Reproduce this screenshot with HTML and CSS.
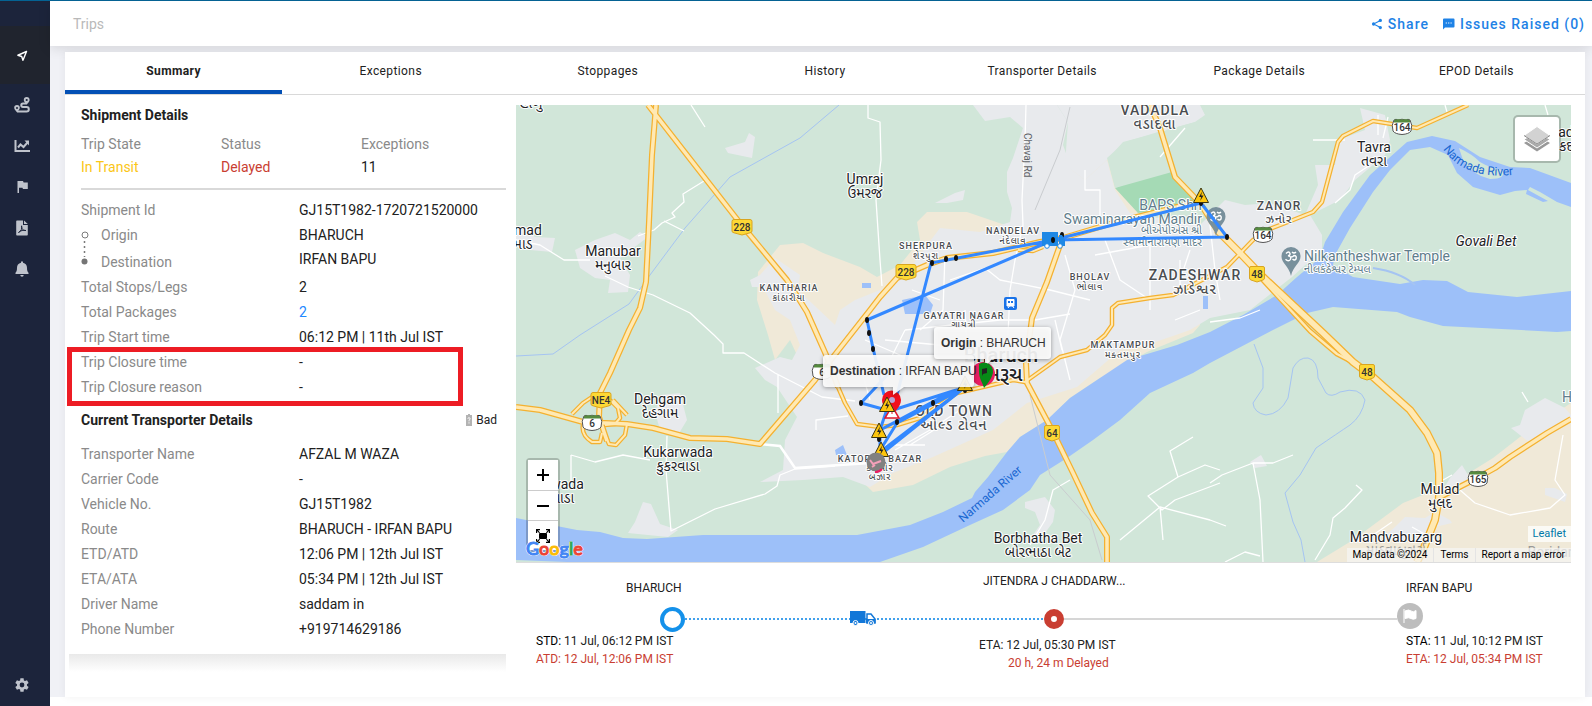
FILE: index.html
```html
<!DOCTYPE html>
<html lang="en">
<head>
<meta charset="utf-8">
<title>Trips</title>
<link rel="stylesheet" href="styles.css">
</head>
<body>
<nav class="sidebar" aria-label="Main">
  <a class="nav-item active" href="#trips" aria-label="Trips"><svg viewBox="0 0 16 16"><path d="M14 2 2.500 7 7.600 8.600 9.300 13.600Z" fill="none" stroke="#fff" stroke-width="1.900" stroke-linejoin="round"/></svg></a>
  <a class="nav-item" href="#routes" aria-label="Routes"><svg viewBox="0 0 16 16"><path d="M12.500 6.500H9a1.500 1.500 0 0 0 0 3.500h3.600a2.200 2.200 0 0 1 0 4.400H3" fill="none" stroke="#bfc3cc" stroke-width="2"/><path fill="#bfc3cc" fill-rule="evenodd" d="M12.700 0a2.900 2.900 0 0 1 2.900 2.900C15.600 4.700 12.700 7.500 12.700 7.500S9.800 4.700 9.800 2.900A2.900 2.900 0 0 1 12.700 0Zm0 1.900a1.100 1.100 0 1 0 0 2.200 1.100 1.100 0 0 0 0-2.200ZM3 8a2.800 2.800 0 0 1 2.800 2.800C5.800 12.500 3 15.200 3 15.200S.2 12.500.2 10.800A2.800 2.800 0 0 1 3 8Zm0 1.900a1 1 0 1 0 0 2 1 1 0 0 0 0-2Z"/></svg></a>
  <a class="nav-item" href="#reports" aria-label="Reports"><svg viewBox="0 0 16 16"><path d="M1.500 2v11H16" fill="none" stroke="#bfc3cc" stroke-width="2"/><path d="M4 9.500 6.500 6.500 9.500 9 13.500 4.500" fill="none" stroke="#bfc3cc" stroke-width="2"/><path d="M10.500 2.500H15V7.500Z" fill="#bfc3cc"/></svg></a>
  <a class="nav-item" href="#flags" aria-label="Flags"><svg viewBox="0 0 16 16"><path d="M3.500 2H9l.6 1.400h4.200v6.700H9L8.400 8.700H5V14H3.500Z" fill="#bfc3cc"/></svg></a>
  <a class="nav-item" href="#documents" aria-label="Documents"><svg viewBox="0 0 16 16"><path d="M2.200 1.200Q2.200.4 3 .4H9V5h4.800v9.800q0 .8-.8.8H3q-.8 0-.8-.8ZM10 .4 13.800 4H10Z" fill="#bfc3cc"/><path d="M4.500 12.500C7 11.500 8.500 8 7.600 5.800 7 8.500 9.300 11 12 10.500 9.500 9.800 6.500 10.500 4.500 12.500Z" fill="none" stroke="#1c243b"/></svg></a>
  <a class="nav-item" href="#alerts" aria-label="Alerts"><svg viewBox="0 0 16 16"><path d="M7 .5h2v1.200c2.700.6 4 2.600 4 5 0 3 .6 3.800 1.500 5v1.300h-13v-1.300c.9-1.200 1.500-2 1.500-5 0-2.400 1.300-4.400 4-5ZM6.300 14h3.400a1.700 1.700 0 0 1-3.400 0Z" fill="#bfc3cc"/></svg></a>
  <a class="nav-item settings" href="#settings" aria-label="Settings"><svg viewBox="0 0 24 24"><path fill="#bfc3cc" d="M19.400 13a7.500 7.500 0 0 0 0-2l2.500-1.900-2.400-4.200-3 1.200a7.600 7.600 0 0 0-1.700-1L14.400 2h-4.800l-.5 3.100a7.600 7.600 0 0 0-1.700 1l-3-1.200L2 9.100 4.600 11a7.500 7.500 0 0 0 0 2L2 14.900l2.400 4.200 3-1.200q.8.600 1.700 1l.5 3.100h4.800l.4-3.100q.9-.4 1.700-1l3 1.200 2.400-4.200ZM12 15.600a3.600 3.600 0 1 1 0-7.200 3.600 3.600 0 0 1 0 7.200Z"/></svg></a>
</nav>
<div class="page">
  <header class="topbar">
    <h1>Trips</h1>
    <div class="actions">
      <button type="button"><svg width="12" height="12" viewBox="0 0 13 14"><path d="M10.500 2.800 2.500 7l8 4.200" fill="none" stroke="currentColor" stroke-width="1.300"/><g fill="currentColor"><circle cx="10.400" cy="2.800" r="1.900"/><circle cx="2.500" cy="7" r="1.900"/><circle cx="10.400" cy="11.200" r="1.900"/></g></svg>Share</button>
      <button type="button"><svg width="13" height="14" viewBox="0 0 13 14"><path d="M2 1.500h9.500q1 0 1 1V9.500q0 1-1 1H3L1 12.500V2.500q0-1 1-1Z" fill="currentColor"/><path d="M3.700 6h1.200m1.200 0h1.200m1.200 0h1.200" stroke="#fff" stroke-width="1.200"/></svg>Issues Raised (0)</button>
    </div>
  </header>
  <main class="card">
    <div class="tabs" role="tablist">
      <button role="tab" aria-selected="true" class="selected">Summary</button>
      <button role="tab">Exceptions</button>
      <button role="tab">Stoppages</button>
      <button role="tab">History</button>
      <button role="tab">Transporter Details</button>
      <button role="tab">Package Details</button>
      <button role="tab">EPOD Details</button>
    </div>
    <div class="content">
      <section class="details">
        <h2>Shipment Details</h2>
        <dl class="states">
          <div><dt>Trip State</dt><dd class="amber">In Transit</dd></div>
          <div><dt>Status</dt><dd class="red">Delayed</dd></div>
          <div><dt>Exceptions</dt><dd>11</dd></div>
        </dl>
        <dl class="rows">
          <div class="row"><dt>Shipment Id</dt><dd>GJ15T1982-1720721520000</dd></div>
          <div class="leg">
            <svg class="leg-mark" viewBox="0 0 8 36"><circle cx="4" cy="4" r="3" fill="none" stroke="#7a7a7a"/><path d="M3.500 10v16" stroke="#7a7a7a" stroke-width="1.500" stroke-dasharray="2 3"/><circle cx="3.500" cy="30.500" r="3" fill="#757575"/></svg>
            <div class="row"><dt>Origin</dt><dd>BHARUCH</dd></div>
            <div class="row"><dt>Destination</dt><dd>IRFAN BAPU</dd></div>
          </div>
          <div class="row"><dt>Total Stops/Legs</dt><dd>2</dd></div>
          <div class="row"><dt>Total Packages</dt><dd><a href="#packages">2</a></dd></div>
          <div class="row"><dt>Trip Start time</dt><dd>06:12 PM | 11th Jul IST</dd></div>
          <div class="closure">
            <div class="row"><dt>Trip Closure time</dt><dd>-</dd></div>
            <div class="row"><dt>Trip Closure reason</dt><dd>-</dd></div>
          </div>
        </dl>
        <div class="sub-head">
          <h2>Current Transporter Details</h2>
          <span class="battery"><svg width="6" height="12" viewBox="0 0 6 12"><path d="M2 0h2v1h2v11H0V1h2Z" fill="#b3b3b3"/><path d="M1.900 4.700Q2 3.700 3 3.700t1.100 1Q4.100 5.500 3 6.300v1M3 8.300v1.200" stroke="#fff" fill="none"/></svg>Bad</span>
        </div>
        <dl class="rows">
          <div class="row"><dt>Transporter Name</dt><dd>AFZAL M WAZA</dd></div>
          <div class="row"><dt>Carrier Code</dt><dd>-</dd></div>
          <div class="row"><dt>Vehicle No.</dt><dd>GJ15T1982</dd></div>
          <div class="row"><dt>Route</dt><dd>BHARUCH - IRFAN BAPU</dd></div>
          <div class="row"><dt>ETD/ATD</dt><dd>12:06 PM | 12th Jul IST</dd></div>
          <div class="row"><dt>ETA/ATA</dt><dd>05:34 PM | 12th Jul IST</dd></div>
          <div class="row"><dt>Driver Name</dt><dd>saddam in</dd></div>
          <div class="row"><dt>Phone Number</dt><dd>+919714629186</dd></div>
        </dl>
      </section>
      <section class="journey">
        <div class="map">
          <svg class="map-canvas" viewBox="516 105 1055 457" preserveAspectRatio="xMidYMid slice">
            <defs>
              <g id="warn"><path d="M0-8 7.500 6.500h-15Z" fill="#fdc50c" stroke="#3a3410" stroke-linejoin="round"/><path d="M1-4.500-2 1H.2L-.8 5 2.500-.5H.2Z" fill="#222"/></g>
              <g id="nh"><path d="M-8-7.500H8Q10-7.500 10-5.500V4Q10 5.500 8 5.800L0 8-8 5.800Q-10 5.500-10 4V-5.500Q-10-7.500-8-7.500Z" fill="#fdd835" stroke="#d9a520"/></g>
              <g id="nh-s"><path d="M-6-7.500H6Q7.500-7.500 7.500-6V4Q7.500 5.500 6 6L0 8-6 6Q-7.500 5.500-7.500 4V-6Q-7.500-7.500-6-7.500Z" fill="#fdd835" stroke="#d9a520"/></g>
              <g id="sh"><path d="M-8-7Q-6-8.500-4-7 0-8.500 4-7 6-8.500 8-7 11-2 9 4 7 7 0 7.500-7 7-9 4-11-2-8-7Z" fill="#fff" stroke="#555"/><path d="M-8-7Q-6-8 0-7.500 6-8 8-7V-4.500H-8Z" fill="#558b3f"/></g>
              <g id="om"><path d="M0 18C-2 8-9.500 5-9.500-1.500a9.500 9.500 0 0 1 19 0C9.500 5 2 8 0 18Z" fill="#78909c"/><path d="M-5-4.500q3-3 4 0 .3 2-2 2.300 3.500.3 2.500 3.500-2 3-5 0M0-1q2 0 3-1.500 3 0 2 3.500-1.500 2-3.500 0M1-6q2 2 4 0" fill="none" stroke="#fff" stroke-width="1.400"/></g>
            </defs>
            <rect x="516" y="105" width="1055" height="457" fill="#d1e6d9"/>
            <g fill="#f0e9d8">
              <path d="M758 272 780 245 803 243 823 253 860 267 877 277 900 265 920 240 917 222 927 212 967 212 1005 225 1035 235 1070 215 1060 150 1095 170 1107 155 1115 187 1140 215 1200 240 1200 325 1193 333 1147 352 1100 378 1070 398 1047 420 1020 437 1007 452 985 456 950 467 913 485 873 492 850 470 790 340 775 360 768 335 757 300Z"/>
              <path d="M1317 562 1353 540 1403 503 1453 483 1493 458 1520 437 1571 403V562Z"/>
            </g>
            <g fill="#e8eaed">
              <path d="M973 105 985 121 1010 117 1023 128 1013 158 1007 172 1007 192 1012 208 1010 222 980 232 940 228 925 248 905 275 880 290 855 300 840 310 835 325 798 290 800 275 775 258 760 275 750 280 752 287 763 287 775 310 790 320 800 345 792 360 780 357 755 368 765 380 777 387 797 417 785 440 783 470 760 482 803 480 843 477 870 487 893 473 933 457 993 430 1027 403 1077 387 1120 350 1147 345 1190 330 1210 318 1250 310 1292 277 1322 250 1322 235 1310 215 1340 200 1355 180 1385 155 1390 140 1385 115 1360 108 1365 130 1338 140 1335 165 1315 165 1318 185 1305 215 1270 203 1245 205 1225 200 1200 225 1130 213 1115 190 1107 160 1085 180 1072 170 1063 145 1068 122 1057 105Z"/>
              <path d="M1057 105H1200L1205 115 1195 122 1150 135 1123 142 1107 160 1085 180 1065 165 1068 122Z"/>
              <path d="M595 240 615 233 630 240 640 232 648 237 620 258 630 275 628 292 608 293 610 280 595 278 580 268 575 250ZM516 225 535 237 555 238 552 252 530 250 516 247Z"/>
              <path d="M725 148 745 142 749 133 755 137 752 158 728 153ZM661 395 680 393 687 420 678 435 660 430 655 412ZM643 502 651 504 660 524 678 530 668 537 628 533 635 522ZM1025 502 1045 497 1055 510 1053 522 1040 540 1028 542 1040 525 1035 512 1025 508ZM1511 428 1520 425 1525 410 1545 398 1565 408 1571 415V422L1530 443ZM1450 478 1462 465 1468 475 1465 490 1440 495ZM1395 527 1405 517 1425 518 1435 512 1450 520 1452 523 1435 527 1425 540 1380 540ZM1250 462 1261 455 1267 466 1255 468ZM1545 488 1555 488 1567 494 1565 502 1545 495ZM935 203 955 193 965 190 963 200 947 203Z"/>
            </g>
            <path d="M1115 188 1168 168 1198 203 1138 213Z" fill="#a5dab5"/>
            <path d="M1125 142 1158 132 1172 172 1115 188 1107 158ZM1166 130 1210 118V200L1182 180Z" fill="#d1e6d9"/>
            <g fill="#9dc0f9">
              <path d="M516 518 577 530 600 532 623 538 647 539 703 535 857 535 910 525 943 512 972 498 975 492 988 477 1007 452 1020 437 1047 420 1070 398 1100 378 1127 360 1177 345 1210 332 1243 315 1277 295 1297 277 1320 258 1325 242 1343 212 1370 175 1407 142 1432 136 1455 141 1480 157 1510 167 1530 168 1571 183V207L1557 202 1540 192 1530 187 1528 190 1548 201 1543 202 1526 194 1527 190 1515 191 1500 195 1473 187 1457 173 1448 155 1430 147 1410 150 1390 170 1373 192 1350 228 1335 255 1333 265 1353 277 1400 284 1423 280 1447 281 1468 292 1517 297 1571 291V331L1557 332 1443 326 1410 317 1397 312 1333 307 1307 313 1273 330 1210 363 1193 373 1150 393 1120 420 1093 440 1067 458 1040 475 1030 490 1003 510 970 525 923 547 880 562H567L516 560Z"/>
              <path d="M902 300 925 295 933 305 930 314 905 314ZM862 283h9v5h-9ZM1203 296h5v13h-5ZM835 450 843 445 847 455 836 455Z"/>
            </g>
            <path d="M1459 148Q1472 154 1480 162 1490 168 1502 170 1507 179 1490 179 1472 175 1463 160Z" fill="#d1e6d9"/>
            <g fill="none" stroke="#a5c4f2">
              <path d="M839 105 800 138 730 177 685 228 650 275 629 304 580 335 553 354 516 356M1254 344 1263 368V388L1253 403Q1254 413 1266 415 1280 414 1288 398L1293 368Q1299 357 1308 358 1318 360 1318 378L1326 393Q1331 398 1340 392 1360 386 1365 400 1362 416 1350 425 1338 433 1316 448L1300 475 1285 493 1293 522 1301 540 1305 562"/>
              <path d="M1373 268Q1400 272 1415 285" stroke-width="2"/>
            </g>
            <g fill="none" stroke="#fff" stroke-width="1.300" stroke-linejoin="round">
              <path d="M691 105 705 127M516 240 540 245 564 260 590 260M605 276 628 287 653 295 690 313 714 335 723 344V353H744L775 373 822 397 855 401M704 181 683 194 684 202 672 213 675 217 662 223 654 230 638 236M664 221 684 231M667 436 666 470 671 531 715 509 765 494 777 486 780 475 795 469 835 466M571 455 595 462 623 455 650 460M571 455V490M778 375V413M816 430V420L848 416"/>
              <path d="M868 105V118L880 122 881 160 876 200 880 260 882 286M1026 105 1025 140 1022 200 1023 225 1015 260 1010 290 1008 335M945 255 943 310 920 330M1260 310 1240 318 1210 322M1210 225 1215 270 1220 300M1160 157 1185 128M950 280 985 268 1000 280 1050 290 1090 300M965 310 967 345M905 330 1000 320 1035 320 1070 314M885 340 940 345M1065 255 1075 290 1060 340 1070 380M1085 170V190H1100V230M1105 240 1120 280 1150 300M1095 255 1150 245 1150 310M1175 320 1200 310M1180 260V295M912 290 940 300M865 340 900 355 920 370M890 360 905 330M1190 250 1180 280M860 365 870 400M920 370 940 360M975 340 990 370M1055 320 1062 350M895 450 930 430 960 410M910 445 950 420M880 445 925 445"/>
              <path d="M1193 437 1170 451 1178 477 1148 496 1162 510 1175 500 1220 483M1178 477 1205 465 1220 470M1120 540 1160 507 1210 520M1160 507 1163 540M1070 480 1053 490 1045 520 1030 545M1253 463 1260 500 1263 562M1210 483 1222 475 1253 463 1273 463 1293 455M1210 520 1226 526M1356 485 1362 490 1345 508 1333 518 1330 535 1315 560M1460 490 1475 503 1510 515 1550 508 1565 495 1555 480 1563 435M1443 480 1452 475M1225 562 1245 552 1260 556M1373 535 1392 522M1412 527 1435 540M1522 392 1528 402M1335 203 1350 190 1355 175 1370 165M1378 115V135M1388 117 1383 138M1545 105 1548 115M1445 105 1447 112M1313 140H1345"/>
            </g>
            <path d="M760 444 780 446 795 468 825 466 870 463" fill="none" stroke="#fff" stroke-width="2.500"/>
            <path d="M1070 107 1060 150 1035 210M1030 395 1050 475 1090 520 1102 560" fill="none" stroke="#c9cccf"/>
            <g fill="none" stroke-linejoin="round">
              <g stroke="#f4b130">
                <path stroke-width="4.500" d="M572 414 583 403 592 397M610 400 618 408 620 418 615 424 605 425M613 400 627 415M627 424 625 435 616 445 609 444 605 435M583 425Q581 435 592 442L600 442 602 433M838 387 845 403 857 424 880 427 897 425 920 418 957 393 983 387 1013 380 1025 382 1060 357 1087 350 1105 335 1112 325V308L1118 303 1150 298 1173 295 1227 267 1253 240 1267 230 1293 220 1313 212 1322 202 1338 142 1343 136 1373 121 1417 128 1468 105M1018 250 1033 251 1043 247"/>
                <path stroke-width="6" d="M516 407 540 410 583 422 627 424 653 428 690 438 727 439 760 444 815 380 870 310 880 297 897 278 927 265 947 258 993 253 1040 242 1063 238 1113 223 1193 203M648 105 740 223 787 280 807 312 827 357 838 387M656 105 652 155 649 222 646 282 640 308 629 330 610 373 600 393 599 417 607 441M1060 245 1047 282 1032 318 1026 363 1027 383 1052 430 1073 473 1092 513 1107 537V562M1571 419 1547 433 1510 457 1495 468 1477 478 1440 497M1150 105 1160 128 1175 177 1200 203 1217 230"/>
                <path stroke-width="8" d="M1217 230 1240 253 1263 277 1323 333 1353 362 1373 377 1410 410 1427 433 1437 453 1439 473V497L1435 520 1423 550 1417 562"/>
                <path stroke-width="5" d="M1260 277 1310 331 1337 354 1360 366"/>
              </g>
              <g stroke="#ffe9b3">
                <path stroke-width="2" d="M572 414 583 403 592 397M610 400 618 408 620 418 615 424 605 425M613 400 627 415M627 424 625 435 616 445 609 444 605 435M583 425Q581 435 592 442L600 442 602 433M838 387 845 403 857 424 880 427 897 425 920 418 957 393 983 387 1013 380 1025 382 1060 357 1087 350 1105 335 1112 325V308L1118 303 1150 298 1173 295 1227 267 1253 240 1267 230 1293 220 1313 212 1322 202 1338 142 1343 136 1373 121 1417 128 1468 105M1018 250 1033 251 1043 247"/>
                <path stroke-width="3.500" d="M516 407 540 410 583 422 627 424 653 428 690 438 727 439 760 444 815 380 870 310 880 297 897 278 927 265 947 258 993 253 1040 242 1063 238 1113 223 1193 203M648 105 740 223 787 280 807 312 827 357 838 387M656 105 652 155 649 222 646 282 640 308 629 330 610 373 600 393 599 417 607 441M1060 245 1047 282 1032 318 1026 363 1027 383 1052 430 1073 473 1092 513 1107 537V562M1571 419 1547 433 1510 457 1495 468 1477 478 1440 497M1150 105 1160 128 1175 177 1200 203 1217 230"/>
                <path stroke-width="5.500" d="M1217 230 1240 253 1263 277 1323 333 1353 362 1373 377 1410 410 1427 433 1437 453 1439 473V497L1435 520 1423 550 1417 562"/>
                <path stroke-width="2.500" d="M1260 277 1310 331 1337 354 1360 366"/>
              </g>
            </g>
            <g class="shields">
              <use href="#nh" x="742" y="227"/><text x="742" y="231">228</text>
              <use href="#nh" x="906" y="272"/><text x="906" y="276">228</text>
              <use href="#nh" x="601" y="400"/><text x="601" y="404">NE4</text>
              <use href="#nh-s" x="1257" y="274"/><text x="1257" y="278">48</text>
              <use href="#nh-s" x="1367" y="372"/><text x="1367" y="376">48</text>
              <use href="#nh-s" x="1052" y="433"/><text x="1052" y="437">64</text>
              <use href="#sh" x="1402" y="127"/><text x="1402" y="131">164</text>
              <use href="#sh" x="1263" y="235"/><text x="1263" y="239">164</text>
              <use href="#sh" x="1478" y="479"/><text x="1478" y="483">165</text>
              <use href="#sh" x="592" y="423"/><text x="592" y="427">6</text>
              <use href="#sh" x="822" y="372"/><text x="822" y="376">6</text>
            </g>
            <use href="#om" x="1216" y="218"/><use href="#om" x="1291" y="258"/>
            <g><rect x="1004" y="297" width="13" height="13" rx="2" fill="#1a73e8"/><path d="M1007 299.500h7v6.500h-7ZM1008 308l1.500-2m3 0 1.500 2" fill="#fff" stroke="#fff"/><path d="M1008 301h2v2h-2Zm3 0h2v2h-2Z" fill="#1a73e8"/></g>
            <g class="place">
              <text x="531" y="108">હાબુ</text>
              <text x="528" y="235">mad</text><text x="523" y="249">માડ</text>
              <text x="613" y="256">Manubar</text><text x="613" y="270">મનુબાર</text>
              <text x="865" y="184">Umraj</text><text x="865" y="198">ઉમરજ</text>
              <text x="660" y="404">Dehgam</text><text x="660" y="418">દેહગામ</text>
              <text x="678" y="457">Kukarwada</text><text x="678" y="471">કુકરવાડા</text>
              <text x="567" y="489">wada</text><text x="563" y="503">વાડા</text>
              <text x="1374" y="152">Tavra</text><text x="1374" y="166">તવરા</text>
              <text x="1486" y="246" class="italic">Govali Bet</text>
              <text x="1566" y="137">ad</text><text x="1566" y="151">કદ</text>
              <text x="1440" y="494">Mulad</text><text x="1440" y="508">મુલદ</text>
              <text x="1396" y="542">Mandvabuzarg</text><text x="1396" y="555" class="faded">માંડવાબુઝર્ગ</text>
              <text x="1038" y="543">Borbhatha Bet</text><text x="1038" y="557">બોરભાઠા બેટ</text>
              <text x="1550" y="557" class="faded">Boridar</text>
            </g>
            <g class="area">
              <text x="1155" y="115" class="town">VADADLA</text><text x="1155" y="129" class="town">વડાદલા</text>
              <text x="1195" y="280" class="town">ZADESHWAR</text><text x="1195" y="294" class="town">ઝાડેશ્વર</text>
              <text x="954" y="416" class="town">OLD TOWN</text><text x="954" y="430" class="town">ઓલ્ડ ટોવન</text>
              <text x="1279" y="210" class="mid">ZANOR</text><text x="1279" y="223" class="mid">ઝનોર</text>
              <text x="789" y="291">KANTHARIA</text><text x="789" y="301">કાંઠારીયા</text>
              <text x="926" y="249">SHERPURA</text><text x="926" y="259">શેરપુરા</text>
              <text x="1013" y="234">NANDELAV</text><text x="1013" y="244">નંદેલાવ</text>
              <text x="1090" y="280">BHOLAV</text><text x="1090" y="290">ભોલાવ</text>
              <text x="964" y="319">GAYATRI NAGAR</text><text x="964" y="328">ગાયત્રી</text>
              <text x="1123" y="348">MAKTAMPUR</text><text x="1123" y="358">મક્તમપુર</text>
              <text x="880" y="462">KATOPOR BAZAR</text><text x="880" y="471">કટોપોર</text><text x="880" y="480">બઝાર</text>
            </g>
            <g class="poi">
              <text x="1202" y="210">BAPS Shri</text><text x="1202" y="224">Swaminarayan Mandir</text>
              <text x="1202" y="234" class="small">બીએપીએસ શ્રી</text><text x="1202" y="246" class="small">સ્વામીનારાયણ મંદિર</text>
              <text x="1304" y="261" class="after">Nilkantheshwar Temple</text><text x="1304" y="273" class="small after">નીલકંઠેશ્વર ટેમ્પલ</text>
              <text x="1567" y="402">H</text>
            </g>
            <text class="river" transform="translate(963 523) rotate(-41)">Narmada River</text>
            <path id="river-arc" d="M1443 149Q1466 182 1520 174" fill="none"/>
            <text class="river"><textPath href="#river-arc">Narmada River</textPath></text>
            <text class="road" transform="translate(1024 133) rotate(90)">Chavaj Rd</text>
            <g class="city"><text x="1001" y="362">Bharuch</text><text x="1003" y="381">ભરૂચ</text></g>
            <path d="M1053 240 1201 203 1227 237 1053 240 867 320 873 348 884 395M890 372 861 403 890 411 953 391 964 388 897 423 879 452M1053 240 931 263 897 395M964 388 880 430M953 391 880 430 880 452 964 388M890 400 880 430M964 388 880 455" fill="none" stroke="#3388ff" stroke-width="3" stroke-linejoin="round"/>
            <g fill="#111"><ellipse cx="867" cy="320" rx="2" ry="3"/><ellipse cx="869" cy="333" rx="2" ry="3"/><ellipse cx="873" cy="349" rx="2" ry="3"/><ellipse cx="861" cy="403" rx="2" ry="3"/><ellipse cx="932" cy="263" rx="2" ry="3"/><ellipse cx="946" cy="259" rx="2" ry="3"/><ellipse cx="956" cy="258" rx="2" ry="3"/><ellipse cx="1201" cy="203" rx="2" ry="3"/><ellipse cx="1227" cy="237" rx="2" ry="3"/><ellipse cx="1062" cy="235" rx="2" ry="3"/><ellipse cx="933" cy="403" rx="2" ry="3"/><ellipse cx="897" cy="422" rx="2" ry="3"/><ellipse cx="879" cy="439" rx="2" ry="3"/><ellipse cx="965" cy="390" rx="2" ry="3"/></g>
            <g><path d="M1042 232h16v14h-16Zm17 3h3l3 5v6h-6Z" fill="#1e88e5"/><circle cx="1047" cy="246" r="2.300" fill="#fff" stroke="#1e88e5"/><circle cx="1060" cy="246" r="2.300" fill="#fff" stroke="#1e88e5"/><ellipse cx="1053" cy="240" rx="2" ry="3" fill="#111"/></g>
            <path d="M892 418C889 411 882 407 882 400a9 9 0 0 1 19 0C901 407 894 411 892 418Z" fill="#f2101c"/><circle cx="892" cy="400" r="3" fill="#b9a4d6"/>
            <path d="M892 406 899 418H885Z" fill="#fff" stroke="#e0182d" stroke-width="1.500"/><path d="M892 410v4" stroke="#e0182d"/>
            <use href="#warn" x="1201" y="196"/><use href="#warn" x="887" y="405"/><use href="#warn" x="879" y="431"/><use href="#warn" x="881" y="450"/><use href="#warn" x="965" y="384"/>
            <circle cx="876" cy="462" r="9.500" fill="#808080"/><path d="M870 460l3 4 8-3M872 467l3-2" fill="none" stroke="#f3a0ba" stroke-width="2"/><path d="M882 469a9 9 0 0 1-7 3" fill="none" stroke="#e91e63" stroke-width="2"/>
            <circle cx="983" cy="374" r="12" fill="#e91e63"/>
            <g class="tips">
              <path d="M826 355H971q3 0 3 3V384q0 3-3 3H904L893 395V387H826q-3 0-3-3V358q0-3 3-3Z"/><path d="M937 327H1048q3 0 3 3V356q0 3-3 3H992L985 367V359H937q-3 0-3-3V330q0-3 3-3Z"/>
              <text x="830" y="375"><tspan class="bold">Destination</tspan> : IRFAN BAPU</text>
              <text x="941" y="347"><tspan class="bold">Origin</tspan> : BHARUCH</text>
            </g>
            <path d="M984 388C982 381 979 379 979 371V364Q984 361 989 364 995 369 992 376 990 381 984 388Z" fill="#078a17"/><path d="M982 376v-7l5-1v5l-4 1" fill="#222"/>
          </svg>
          <div class="zoom"><button type="button" aria-label="Zoom in"><svg viewBox="0 0 12 12"><path d="M0 6h12M6 0v12" stroke="#000" stroke-width="2"/></svg></button><button type="button" aria-label="Zoom out"><svg viewBox="0 0 12 12"><path d="M0 6h12" stroke="#000" stroke-width="2"/></svg></button><button type="button" aria-label="Full screen"><svg class="full" viewBox="0 0 14 14"><rect x="3" y="4" width="8" height="6" rx="1"/><path d="M0 0h4v1.200H2L4 3.500l-.8.7L1.200 2v2H0ZM14 0v4h-1.200V2l-2 2.200-.8-.7L12 1.200h-2V0ZM0 14v-4h1.200v2l2-2.200.8.700-2 2.300h2V14ZM14 14h-4v-1.200h2l-2-2.300.8-.7 2 2.200v-2H14Z"/></svg></button></div>
          <button type="button" class="layers" aria-label="Layers"><svg viewBox="0 0 26 26"><path d="M0 17 13 9 26 17 13 25.500Z" fill="#999"/><path d="M0 13.500 13 5.500 26 13.500 13 22Z" fill="#aaa" stroke="#fff"/><path d="M0 9.500 13 .5 26 9.500 13 18Z" fill="#d2d2d2" stroke="#fff"/><path d="M0 9.500 13 18 26 9.500" fill="none" stroke="#888"/></svg></button>
          <span class="google"><i class="b">G</i><i class="r">o</i><i class="y">o</i><i class="b">g</i><i class="g">l</i><i class="r">e</i></span>
          <a class="leaflet" href="#leaflet">Leaflet</a>
          <div class="credits"><span>Map data ©2024</span><a href="#terms">Terms</a><a href="#report">Report a map error</a></div>
        </div>
        <div class="timeline">
          <div class="stop-names"><span>BHARUCH</span><span class="via">JITENDRA J CHADDARW...</span><span>IRFAN BAPU</span></div>
          <div class="track">
            <span class="node start"></span>
            <span class="line done"><svg class="truck" width="26" height="16" viewBox="0 0 26 16"><path d="M0 1h15.500v12H0Z" fill="#1277d8"/><path d="M17 4h4l4 5v4h-8Z" fill="#fff" stroke="#1277d8" stroke-width="1.500"/><path d="M16 9h9.500v4H16Z" fill="#1277d8"/><g fill="#1277d8" stroke="#fff"><circle cx="5.500" cy="13" r="2.500"/><circle cx="21" cy="13" r="2.500"/></g><g fill="#fff"><circle cx="5.500" cy="13" r="1"/><circle cx="21" cy="13" r="1"/></g></svg></span>
            <span class="node mid-stop"></span>
            <span class="line rest"></span>
            <svg class="node flag" width="26" height="26" viewBox="0 0 26 26"><circle cx="13" cy="13" r="13" fill="#bdbdbd"/><path d="M7 6v14M8 8q4-2 6 0t5-.5v8q-3 1.500-5 0t-6 0Z" fill="#fff" stroke="#fff"/></svg>
          </div>
          <div class="stop-times">
            <div><p><b>STD:</b> 11 Jul, 06:12 PM IST</p><p class="red">ATD: 12 Jul, 12:06 PM IST</p></div>
            <div class="mid-time"><p>ETA: 12 Jul, 05:30 PM IST</p><p class="red late">20 h, 24 m Delayed</p></div>
            <div><p><b>STA:</b> 11 Jul, 10:12 PM IST</p><p class="red">ETA: 12 Jul, 05:34 PM IST</p></div>
          </div>
        </div>
      </section>
    </div>
  </main>
</div>
</body>
</html>
```

FILE: styles.css
```css
* { box-sizing: border-box; }
body { margin: 0; min-height: 100vh; display: flex; border-top: 1px solid #046293; background: #fff; color: #212121; font: 14px/25px Roboto, sans-serif; }
h1, h2, p, dl, dd { margin: 0; }
a { text-decoration: none; }
button { border: 0; padding: 0; background: none; font: inherit; color: inherit; cursor: pointer; }

.sidebar { width: 50px; flex: none; background: #1c243b; padding: 25px 0 1px; display: flex; flex-direction: column; }
.nav-item { height: 41px; padding-right: 6px; display: flex; align-items: center; justify-content: center; }
.nav-item svg { width: 16px; height: 16px; }
.nav-item.active { height: 58px; padding-top: 2px; background: #20242e; }
.nav-item.active svg { width: 12px; height: 12px; }
.settings { margin-top: auto; }

.page { flex: 1; min-width: 0; display: flex; flex-direction: column; padding-bottom: 9px; background: linear-gradient(#f0f1f6, #f0f1f6) no-repeat 0 0 / 100% calc(100% - 9px); }
.topbar { height: 45px; flex: none; padding: 1px 7px 0 23px; display: flex; align-items: center; justify-content: space-between; background: #fff; box-shadow: 0 2px 12px rgba(0, 0, 0, .12); }
.topbar h1 { font-size: 14px; font-weight: 400; color: #b9b9b9; }
.actions { display: flex; gap: 13px; }
.actions button { display: flex; align-items: center; gap: 5px; color: #1e82e6; font-weight: 500; letter-spacing: 1px; }

.card { flex: 1; margin: 6px 7px 0 15px; background: #fff; box-shadow: 0 0 8px rgba(0, 0, 0, .06); }
.tabs { display: flex; border-bottom: 1px solid #d9d9d9; }
.tabs button { flex: 1; height: 42px; padding-top: 1px; border-bottom: 4px solid transparent; font-size: 12px; letter-spacing: .4px; }
.tabs .selected { border-color: #0350b5; font-weight: 700; }
.content { display: flex; gap: 10px; padding: 0 14px 0 4px; }

.details { position: relative; width: 437px; flex: none; align-self: flex-start; padding: 10px 0 12px 12px; }
.details::after { content: ""; position: absolute; inset: 100% 0 auto 0; height: 18px; background: linear-gradient(#e9e9e9, #fff); }
h2 { font-size: 14px; line-height: 20px; font-weight: 700; }
dt { color: #8a8a8a; }
.states { display: flex; margin-top: 8px; padding-bottom: 9px; border-bottom: 2px solid #d9d9d9; line-height: 23px; }
.states div { width: 140px; }
.amber { color: #fbc617; }
.red { color: #c93e32; }
.row { display: grid; grid-template-columns: 218px 1fr; }
.states + .rows { padding-top: 8px; }
.rows a { color: #1e88ff; }
.leg { position: relative; height: 52px; }
.leg dt { padding-left: 20px; }
.leg .row + .row dt { line-height: 29px; }
.leg .row + .row dd { line-height: 22px; }
.leg-mark { position: absolute; left: 0; top: 8px; width: 8px; height: 36px; }
.closure { position: relative; }
.closure::after { content: ""; position: absolute; inset: -3px 43px -6px -14px; border: 5px solid #ed1c24; pointer-events: none; }
.sub-head { height: 42px; padding: 0 9px 2px 0; display: flex; align-items: center; justify-content: space-between; }
.battery { display: flex; align-items: center; gap: 4px; font-size: 12px; }

.journey { flex: 1; min-width: 0; padding-top: 10px; }
.map { position: relative; aspect-ratio: 1055 / 458; overflow: hidden; border-bottom: 1px solid #ddd; }
.map-canvas { display: block; width: 100%; height: 100%; }
.map text { text-anchor: middle; font-family: Roboto, "Noto Sans Gujarati", "Noto Sans", sans-serif; }
.shields text { font-size: 10px; font-weight: 500; fill: #333; }
.place text, .area text, .poi text, .city text { paint-order: stroke; stroke: #fff; stroke-width: 2px; stroke-linejoin: round; }
.place text { font-size: 14px; fill: #202124; }
.place .italic { font-style: italic; }
.place .faded { fill: #999; stroke: none; }
.area text { font-size: 9px; font-weight: 500; letter-spacing: 1px; fill: #4a4d51; }
.area .town { font-size: 14px; }
.area .mid { font-size: 12px; }
.poi text { font-size: 14px; fill: #607d8b; }
.poi text:nth-child(-n+4) { text-anchor: end; }
.poi .after { text-anchor: start; }
.poi .small { font-size: 11px; }
.map .river { font-size: 12px; fill: #1967d2; text-anchor: start; }
.map .road { font-size: 10px; fill: #5f6368; text-anchor: start; }
.city text { font-size: 20px; font-weight: 500; fill: #202124; }
.tips path { fill: #fff; fill-opacity: .9; filter: drop-shadow(0 1px 2px rgba(0, 0, 0, .4)); }
.map .tips text { text-anchor: start; font-family: "Liberation Sans", sans-serif; font-size: 12px; fill: #333; }
.bold { font-weight: 700; }
.zoom { position: absolute; left: 10px; bottom: 10px; border: 2px solid rgba(0, 0, 0, .2); border-radius: 4px; background-clip: padding-box; }
.zoom button { width: 30px; height: 30px; display: flex; align-items: center; justify-content: center; background: #fff; border-top: 1px solid #ccc; }
.zoom button:first-child { border-top: 0; }
.zoom svg { width: 12px; height: 12px; }
.zoom .full { width: 14px; height: 14px; }
.layers { position: absolute; right: 10px; top: 10px; width: 48px; height: 48px; display: flex; align-items: center; justify-content: center; background: #fff; background-clip: padding-box; border: 2px solid rgba(0, 0, 0, .2); border-radius: 5px; }
.layers svg { width: 26px; height: 26px; }
.google { position: absolute; left: 10px; bottom: 4px; font: 500 18px/20px Lato, sans-serif; text-shadow: 0 0 1px #fff, 1px 0 #fff, -1px 0 #fff, 0 1px #fff, 0 -1px #fff; }
.google i { font-style: normal; -webkit-text-stroke: 1px currentColor; }
.b { color: #4285f4; }
.r { color: #ea4335; }
.y { color: #fbbc04; }
.g { color: #34a853; }
.leaflet { position: absolute; right: 0; bottom: 20px; padding: 0 5px; background: rgba(255, 255, 255, .75); color: #0078a8; font-size: 11px; line-height: 16px; }
.credits { position: absolute; right: 0; bottom: 0; display: flex; background: rgba(245, 245, 245, .7); font-size: 10px; line-height: 14px; }
.credits > * { padding: 0 6px; color: #000; }
.credits > * + * { border-left: 1px solid #e4e4e4; }

.timeline { padding: 9px 20px 0; font-size: 12px; line-height: 18px; white-space: nowrap; }
.stop-names { display: grid; grid-template-columns: 357fr 423fr 145fr; padding-left: 90px; }
.stop-names span { margin-top: 7px; }
.stop-names .via { margin: 0 0 7px; }
.track { display: flex; align-items: center; height: 26px; margin: 9px 128px 0 124px; }
.node { flex: none; }
.start { width: 25px; height: 25px; border: 4px solid #1491ea; border-radius: 50%; }
.mid-stop { width: 20px; height: 20px; border: 7px solid #c93e32; border-radius: 50%; }
.flag { margin-bottom: 6px; }
.line { display: flex; align-items: center; justify-content: center; height: 2px; }
.done { flex: 360; background: repeating-linear-gradient(90deg, #42a1ec 0 2px, transparent 2px 4px); }
.rest { flex: 333; background: #d6d6d6; }
.truck { flex: none; margin: 0 4px 3px 0; }
.stop-times { display: grid; grid-template-columns: 443fr 427fr 145fr; }
.stop-times b { font-weight: 400; color: #000; }
.mid-time { margin-top: 4px; }
.late { padding-left: 29px; }
```
